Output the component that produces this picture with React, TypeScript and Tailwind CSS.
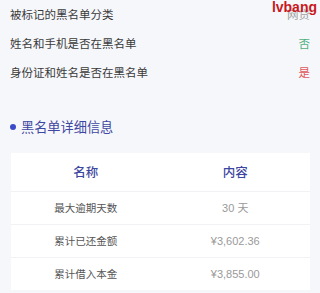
import React from "react";

const font = { fontFamily: '"Noto Sans CJK SC", "Noto Sans", sans-serif' };

export default function App() {
  const top = [
    { k: "被标记的黑名单分类", v: "网贷", c: "text-[#a0a0a0]" },
    { k: "姓名和手机是否在黑名单", v: "否", c: "text-[#4fb07e]" },
    { k: "身份证和姓名是否在黑名单", v: "是", c: "text-[#e0585a]" },
  ];
  const rows = [
    ["最大逾期天数", "30 天"],
    ["累计已还金额", "¥3,602.36"],
    ["累计借入本金", "¥3,855.00"],
  ];
  return (
    <div
      className="relative w-[320px] h-[293px] overflow-hidden bg-[#f6f7fa]"
      style={font}
    >
      <div className="px-[10px]">
        {top.map((r) => (
          <div key={r.k} className="h-[29px] flex items-center justify-between text-[11.5px]">
            <span className="text-[#3a3a3a]">{r.k}</span>
            <span className={r.c}>{r.v}</span>
          </div>
        ))}
      </div>
      <div className="mt-[28px] h-[24px] flex items-center pl-[10px]">
        <span className="w-[6px] h-[6px] rounded-full bg-[#3b4bc8] mr-[5px]" />
        <span className="text-[13.2px] text-[#3d46a2]">黑名单详细信息</span>
      </div>
      <div className="mt-[14px] ml-[11px] w-[299px] bg-white">
        <div className="h-[38px] grid grid-cols-2 items-center text-center text-[12.5px] font-medium text-[#3d46a0]">
          <span>名称</span>
          <span>内容</span>
        </div>
        {rows.map(([k, v]) => (
          <div
            key={k}
            className="h-[33px] grid grid-cols-2 items-center text-center text-[10.5px] border-t border-[#f1f2f5]"
          >
            <span className="text-[#555]">{k}</span>
            <span
              className="text-[#9a9a9a] text-[11px]"
              style={{ fontFamily: '"Liberation Sans", "Noto Sans CJK SC", sans-serif' }}
            >
              {v}
            </span>
          </div>
        ))}
      </div>
      <div
        className="absolute right-[3px] top-[0px] text-[14px] font-bold text-[#c8191f] leading-none"
        style={{ fontFamily: '"Liberation Sans", Arial, sans-serif' }}
      >
        lvbang
      </div>
    </div>
  );
}
